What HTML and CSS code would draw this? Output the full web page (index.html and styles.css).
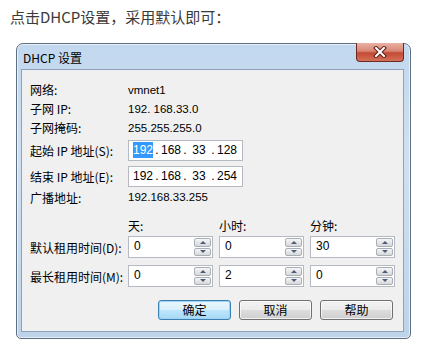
FILE: index.html
```html
<!DOCTYPE html>
<html lang="zh-CN">
<head>
    <meta charset="UTF-8">
    <meta name="viewport" content="width=device-width, initial-scale=1.0">
    <title>DHCP 设置</title>
    <link rel="stylesheet" href="styles.css">
</head>
<body>
    <p class="intro">点击DHCP设置，采用默认即可：</p>

    <div class="window">
        <div class="titlebar">
            <span class="title">DHCP 设置</span>
            <div class="close-btn">
                <svg width="16" height="12" viewBox="0 0 16 12">
                    <path d="M4 2 L12 10 M12 2 L4 10" stroke="#5a1d14" stroke-width="4" stroke-linecap="square"/>
                    <path d="M4 2 L12 10 M12 2 L4 10" stroke="#fff" stroke-width="2" stroke-linecap="square"/>
                </svg>
            </div>
        </div>

        <div class="client">
            <div class="line">
                <span class="label">网络:</span>
                <span class="value">vmnet1</span>
            </div>
            <div class="line">
                <span class="label">子网 IP:</span>
                <span class="value">192. 168.33.0</span>
            </div>
            <div class="line">
                <span class="label">子网掩码:</span>
                <span class="value">255.255.255.0</span>
            </div>
            <div class="line field">
                <span class="label">起始 IP 地址(S):</span>
                <div class="ip-box">
                    <span class="octet"><span class="selected">192</span></span><span class="dot">.</span><span class="octet">168</span><span class="dot">.</span><span class="octet">33</span><span class="dot">.</span><span class="octet">128</span>
                </div>
            </div>
            <div class="line field">
                <span class="label">结束 IP 地址(E):</span>
                <div class="ip-box">
                    <span class="octet">192</span><span class="dot">.</span><span class="octet">168</span><span class="dot">.</span><span class="octet">33</span><span class="dot">.</span><span class="octet">254</span>
                </div>
            </div>
            <div class="line last">
                <span class="label">广播地址:</span>
                <span class="value">192.168.33.255</span>
            </div>

            <div class="lease-head">
                <span></span>
                <span>天:</span>
                <span>小时:</span>
                <span>分钟:</span>
            </div>
            <div class="lease-row">
                <span class="lease-label">默认租用时间(D):</span>
                <div class="spin"><span class="num">0</span><div class="arrows"><span class="up"></span><span class="down"></span></div></div>
                <div class="spin"><span class="num">0</span><div class="arrows"><span class="up"></span><span class="down"></span></div></div>
                <div class="spin"><span class="num">30</span><div class="arrows"><span class="up"></span><span class="down"></span></div></div>
            </div>
            <div class="lease-row second">
                <span class="lease-label">最长租用时间(M):</span>
                <div class="spin"><span class="num">0</span><div class="arrows"><span class="up"></span><span class="down"></span></div></div>
                <div class="spin"><span class="num">2</span><div class="arrows"><span class="up"></span><span class="down"></span></div></div>
                <div class="spin"><span class="num">0</span><div class="arrows"><span class="up"></span><span class="down"></span></div></div>
            </div>

            <div class="buttons">
                <button class="btn default">确定</button>
                <button class="btn">取消</button>
                <button class="btn">帮助</button>
            </div>
        </div>
    </div>
</body>
</html>
```

FILE: styles.css
```css
body {
    margin: 0;
    background: #fff;
    font-family: "Noto Sans CJK SC", sans-serif;
}

.intro {
    margin: 8px 0 0 10px;
    font-size: 15px;
    line-height: 18px;
    color: #3a3a3a;
}

/* 窗口外框 (Aero) */
.window {
    position: relative;
    box-sizing: border-box;
    width: 395px;
    height: 296px;
    margin: 17px 0 0 16px;
    border: 1px solid #5e6f82;
    border-radius: 7px 7px 5px 5px;
    background: linear-gradient(180deg, #c2d8ee 0%, #cfe0f2 40%, #bdd3ea 100%);
    box-shadow: inset 0 0 0 1px rgba(255, 255, 255, 0.6);
}

.titlebar {
    height: 25px;
    display: flex;
    align-items: center;
    padding-left: 6px;
}

.title {
    font-size: 12px;
    color: #000;
    padding-top: 1px;
}

.close-btn {
    position: absolute;
    top: -1px;
    right: 6px;
    width: 48px;
    height: 19px;
    box-sizing: border-box;
    border: 1px solid #6b2a22;
    border-top: none;
    border-radius: 0 0 4px 4px;
    background: linear-gradient(180deg, #e9b2a6 0%, #d88673 45%, #c44a33 55%, #d5705a 100%);
    display: flex;
    align-items: center;
    justify-content: center;
}

/* 客户区 */
.client {
    box-sizing: border-box;
    height: 263px;
    margin: 0 6px 0 4px;
    border: 1px solid #8ea3b9;
    background: #f0f0f0;
    padding: 10px 10px 0 8px;
    font-size: 12px;
    color: #000;
}

.line {
    display: flex;
    align-items: center;
    height: 19px;
}

.line.field {
    height: 26px;
}

.line.last {
    height: 16px;
}

.label {
    width: 98px;
    flex-shrink: 0;
    white-space: nowrap;
}

.value {
    font-family: "Liberation Sans", sans-serif;
    font-size: 11.5px;
}

.ip-box {
    display: flex;
    align-items: center;
    box-sizing: border-box;
    width: 115px;
    height: 21px;
    padding-left: 3px;
    background: #fff;
    border: 1px solid #b5b9c2;
    font-family: "Liberation Sans", sans-serif;
    font-size: 12px;
}

.octet {
    width: 22px;
    text-align: center;
}

.dot {
    width: 6px;
    text-align: center;
}

.selected {
    background: #3399ff;
    color: #fff;
    padding: 1px 0;
}

/* 租用时间 */
.lease-head,
.lease-row {
    display: grid;
    grid-template-columns: 92px 85px 85px 85px;
    column-gap: 6px;
    align-items: center;
}

.lease-label {
    white-space: nowrap;
}

.lease-head {
    height: 18px;
    margin-top: 11px;
}

.lease-row {
    height: 22px;
    margin-top: 2px;
}

.lease-row.second {
    margin-top: 7px;
}

.spin {
    display: flex;
    box-sizing: border-box;
    height: 22px;
    background: #fff;
    border: 1px solid #b5b9c2;
    padding: 1px 1px 1px 5px;
}

.num {
    flex: 1;
    font-family: "Liberation Sans", sans-serif;
    font-size: 12px;
    line-height: 16px;
}

.arrows {
    display: flex;
    flex-direction: column;
    gap: 1px;
    width: 17px;
}

.arrows span {
    flex: 1;
    box-sizing: border-box;
    border: 1px solid #a9afb8;
    border-radius: 2px;
    background: linear-gradient(180deg, #f6f6f6 0%, #e6e6e6 50%, #d8d8d8 100%);
    display: flex;
    align-items: center;
    justify-content: center;
}

.arrows .up::before,
.arrows .down::before {
    content: "";
    width: 0;
    height: 0;
    border-left: 3px solid transparent;
    border-right: 3px solid transparent;
}

.arrows .up::before {
    border-bottom: 3px solid #4a5d7e;
}

.arrows .down::before {
    border-top: 3px solid #4a5d7e;
}

/* 按钮 */
.buttons {
    display: flex;
    justify-content: flex-end;
    gap: 8px;
    margin-top: 13px;
}

.btn {
    width: 73px;
    height: 20px;
    padding: 0;
    border: 1px solid #707070;
    border-radius: 3px;
    background: linear-gradient(180deg, #f2f2f2 0%, #ebebeb 49%, #dddddd 50%, #cfcfcf 100%);
    box-shadow: inset 0 0 0 1px rgba(255, 255, 255, 0.7);
    font-family: "Noto Sans CJK SC", sans-serif;
    font-size: 12px;
    line-height: 16px;
    color: #000;
}

.btn.default {
    border-color: #3c7fb1;
    box-shadow: inset 0 0 0 1px #9fd3f5;
    background: linear-gradient(180deg, #eaf6fd 0%, #d9f0fc 49%, #bee6fd 50%, #a7d9f5 100%);
}
```
